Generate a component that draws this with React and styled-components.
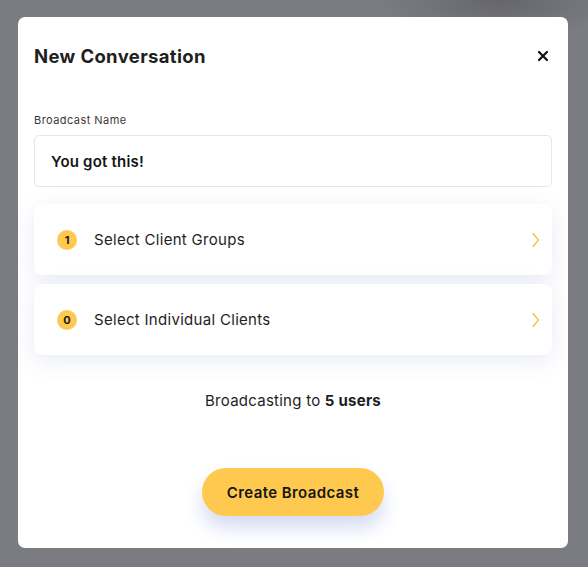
import React from "react";
import styled, { createGlobalStyle } from "styled-components";

const Global = createGlobalStyle`
  html, body { margin: 0; padding: 0; }
  body {
    width: 588px;
    height: 567px;
    overflow: hidden;
    background: #7b7c81;
    font-family: Inter, "Noto Sans", sans-serif;
    color: #1c1c1c;
  }
`;

const Backdrop = styled.div`
  width: 588px;
  height: 567px;
  box-sizing: border-box;
  padding: 17px 20px 19px 18px;
  background:
    radial-gradient(ellipse 120px 40px at 500px 0px, rgba(60,60,65,0.35), transparent),
    #7b7c81;
`;

const Modal = styled.div`
  width: 550px;
  height: 531px;
  box-sizing: border-box;
  background: #fff;
  border-radius: 7px;
  padding: 27px 16px 32px 16px;
  display: flex;
  flex-direction: column;
`;

const Header = styled.div`
  display: flex;
  align-items: center;
  justify-content: space-between;
  height: 24px;
`;

const Title = styled.h1`
  margin: 0;
  font-size: 18.5px;
  font-weight: 700;
  letter-spacing: 0.35px;
  color: #1f1f1f;
`;

const Close = styled.button`
  border: 0;
  background: none;
  padding: 0;
  width: 12px;
  height: 12px;
  margin-right: 3px;
  display: flex;
  cursor: pointer;
`;

const Label = styled.div`
  margin-top: 45px;
  font-size: 11px;
  letter-spacing: 0.45px;
  color: #3a3a3a;
  line-height: 14px;
`;

const Input = styled.div`
  margin-top: 8px;
  height: 52px;
  box-sizing: border-box;
  border: 1px solid #e6e7ea;
  border-radius: 5px;
  padding: 0 16px;
  display: flex;
  align-items: center;
  font-size: 15px;
  font-weight: 600;
  letter-spacing: 0.2px;
  color: #151515;
`;

const Cards = styled.div`
  margin-top: 17px;
  display: flex;
  flex-direction: column;
  gap: 9px;
`;

const Card = styled.div`
  height: 71px;
  border-radius: 8px;
  background: #fff;
  box-shadow: 0 6px 22px rgba(70, 95, 170, 0.12);
  display: flex;
  align-items: center;
  padding: 0 12px 0 23px;
`;

const Badge = styled.span`
  width: 20px;
  height: 20px;
  border-radius: 50%;
  background: #ffc94f;
  display: flex;
  align-items: center;
  justify-content: center;
  font-size: 11px;
  font-weight: 700;
  color: #1a1a1a;
`;

const CardText = styled.span`
  margin-left: 17px;
  flex: 1;
  font-size: 15px;
  letter-spacing: 0.3px;
  color: #1e1e1e;
`;

const Summary = styled.div`
  margin-top: 36px;
  text-align: center;
  font-size: 15px;
  letter-spacing: 0.25px;
  color: #1e1e1e;
  b { font-weight: 700; }
`;

const Footer = styled.div`
  margin-top: auto;
  display: flex;
  justify-content: center;
`;

const Primary = styled.button`
  width: 182px;
  height: 48px;
  border: 0;
  border-radius: 24px;
  background: #ffc94f;
  font-family: inherit;
  font-size: 15px;
  font-weight: 600;
  letter-spacing: 0.4px;
  color: #161616;
  box-shadow: 0 12px 18px rgba(70, 100, 200, 0.22);
  cursor: pointer;
`;

const Chevron = () => (
  <svg width="10" height="16" viewBox="0 0 10 16" fill="none">
    <path d="M3 1.5 L8.5 8 L3 14.5" stroke="#ffbd45" strokeWidth="1.5" strokeLinecap="round" strokeLinejoin="round" />
  </svg>
);

export default function App() {
  const rows = [
    { n: 1, label: "Select Client Groups" },
    { n: 0, label: "Select Individual Clients" },
  ];
  return (
    <>
      <Global />
      <Backdrop>
        <Modal>
          <Header>
            <Title>New Conversation</Title>
            <Close aria-label="Close">
              <svg width="12" height="12" viewBox="0 0 12 12">
                <path d="M2 2 L10 10 M10 2 L2 10" stroke="#111" strokeWidth="2.2" strokeLinecap="round" />
              </svg>
            </Close>
          </Header>
          <Label>Broadcast Name</Label>
          <Input>You got this!</Input>
          <Cards>
            {rows.map((r) => (
              <Card key={r.label}>
                <Badge>{r.n}</Badge>
                <CardText>{r.label}</CardText>
                <Chevron />
              </Card>
            ))}
          </Cards>
          <Summary>
            Broadcasting to <b>5 users</b>
          </Summary>
          <Footer>
            <Primary>Create Broadcast</Primary>
          </Footer>
        </Modal>
      </Backdrop>
    </>
  );
}
